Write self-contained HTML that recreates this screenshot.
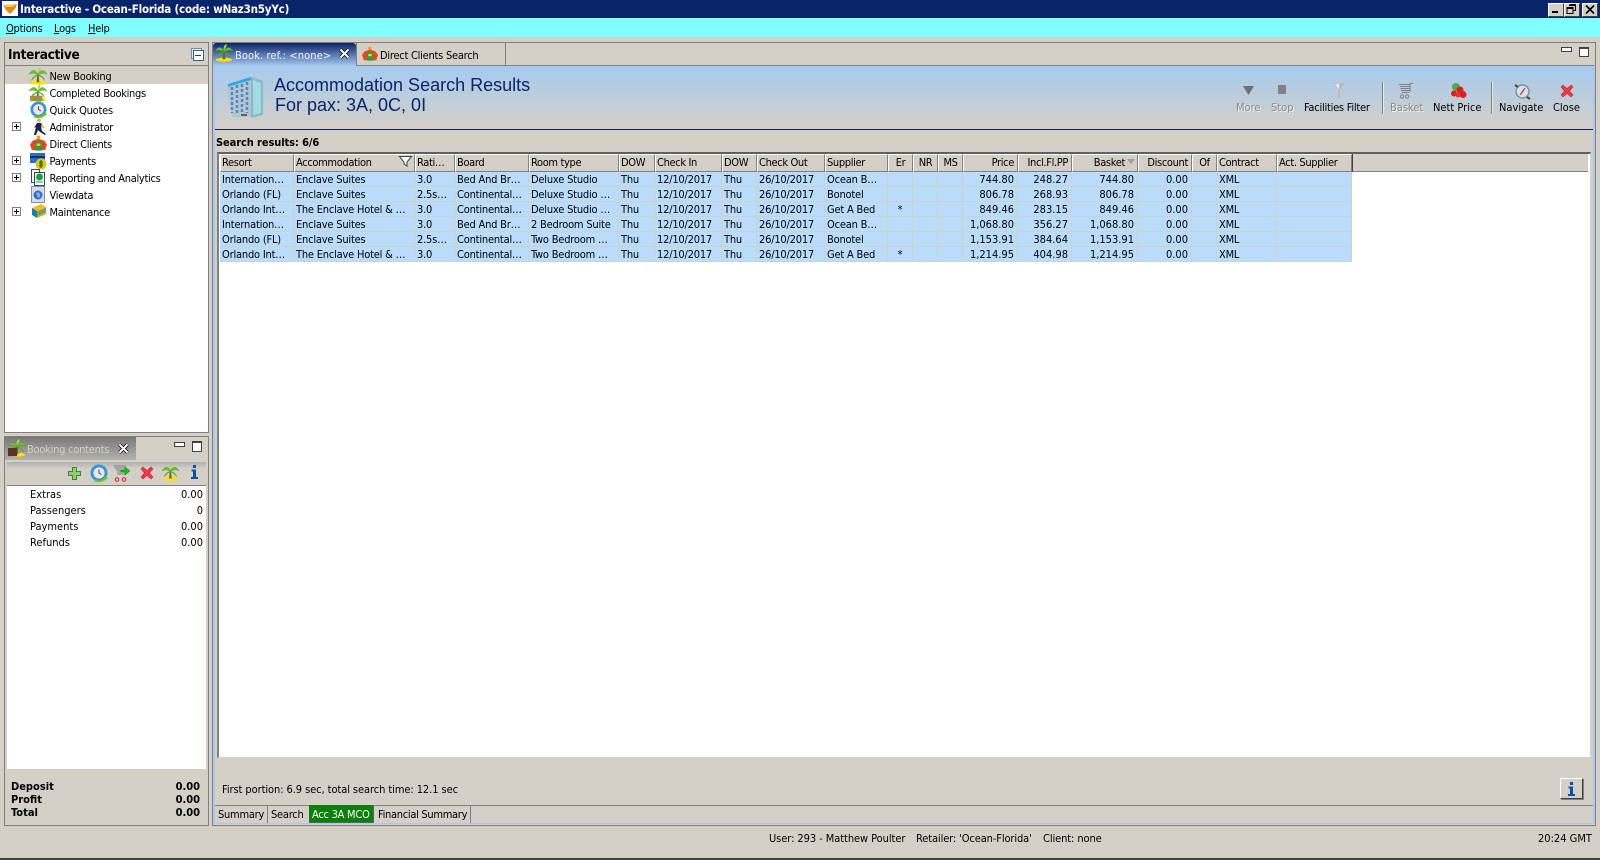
<!DOCTYPE html>
<html><head><meta charset="utf-8"><title>Interactive</title>
<style>
html,body{margin:0;padding:0;width:1600px;height:860px;overflow:hidden;background:#d4d0c8}
body{position:relative;font:11px/14px "DejaVu Sans Condensed","Liberation Sans",sans-serif;color:#000}
.a{position:absolute}
.t{position:absolute;white-space:nowrap}
.s{letter-spacing:-.25px}
.r{text-align:right}
.b{font-weight:bold}
svg{position:absolute;overflow:visible}
table{position:absolute;left:220px;top:154px;width:1132px;border-collapse:separate;border-spacing:0;table-layout:fixed}
th{font-weight:normal;text-align:left;height:16px;padding:0 0 0 1px;background:#d4d0c8;border-top:1px solid #fff;border-left:1px solid #fff;border-right:1px solid #808080;border-bottom:1px solid #808080;box-shadow:1px 0 0 #404040;white-space:nowrap;overflow:hidden;line-height:16px;letter-spacing:-.35px}
td{height:13px;padding:1px 0 0 2px;background:#b9dcff;border-right:1px solid #d4d0c8;border-bottom:1px solid #d4d0c8;white-space:nowrap;overflow:hidden;line-height:13px;letter-spacing:-.2px}
th.n,td.n{text-align:right;padding-right:3px;padding-left:0}
td.n{letter-spacing:0}
th.c,td.c{text-align:center;padding-left:0;padding-right:0}
u{text-decoration:underline}
</style></head>
<body>
<svg width="0" height="0" style="position:absolute"><defs>
<g id="palm"><ellipse cx="10" cy="17.500" rx="9" ry="2.200" fill="#ffe000"/><path d="M9 8.500 L10.500 8.500 L11.500 17 L8.500 17Z" fill="#8a5a18"/><path d="M10 8C7 2 3 3 0 8 4 6 7 7 10 9 7 9 3 11 3 15 6 11 8 10 10 9.500 12 10 15 11 17 15 17 11 13 9 10 9 13 7 16 6 20 8 17 3 13 2 10 8Z" fill="#6cc028" stroke="#38901c" stroke-width=".4"/><path d="M10 7C9 4 10 1 13 0 13 3 11 5 10 7Z" fill="#a8e040"/></g>
<g id="xred"><path d="M2 4 4 2 8 5.500 12 2 14 4 10.500 8 14 12 12 14 8 10.500 4 14 2 12 5.500 8Z" fill="#ee3a46" stroke="#c03040" stroke-width=".6"/></g>
<g id="clock"><circle cx="9" cy="9" r="8.500" fill="#2a9be8"/><circle cx="9" cy="9" r="6" fill="#e4e8ee" stroke="#777" stroke-width=".7"/><path d="M9 5.500V9L11.500 10.500" fill="none" stroke="#444" stroke-width="1"/><path d="M5 15Q10 19 16 12L18 14Q12 20 4 17.500Z" fill="#6cc82c"/></g>
<g id="shirt"><circle cx="9" cy="2.500" r="2" fill="#f0a020"/><path d="M3 6 9 4 15 6 18 10 16 16H2L0 10Z" fill="#e8481c"/><path d="M5.500 7H12.500V16.500H5.500Z" fill="#2e9a50"/><path d="M7 9H11V11.500H7Z" fill="#f8d020"/></g>
<g id="info"><path d="M4 0h3v3h-3zM2.500 4.500h4.500v7.500h2v2H2v-2h2v-5.500h-1.500z" fill="#0a50a8"/></g>
</defs></svg>

<!-- title bar -->
<div class="a" style="left:0;top:0;width:1600px;height:18px;background:#0a246a"></div>
<div class="a" style="left:2px;top:1px;width:16px;height:15px;background:#fff"></div>
<svg style="left:3px;top:3px" width="15" height="12"><path d="M0 2 14 1 12 6 7 11 3 7Z" fill="#e08a18"/><path d="M0 2 14 1 9 4 3 4Z" fill="#f8c860"/></svg>
<div class="t b" style="left:20px;top:2px;color:#fff;font-size:11.500px;letter-spacing:-.2px">Interactive - Ocean-Florida (code: wNaz3n5yYc)</div>
<div class="a" style="left:1548px;top:3px;width:14px;height:12px;background:#d4d0c8;border:1px solid;border-color:#fff #404040 #404040 #fff"></div>
<div class="a" style="left:1552px;top:11px;width:6px;height:2px;background:#000"></div>
<div class="a" style="left:1564px;top:3px;width:14px;height:12px;background:#d4d0c8;border:1px solid;border-color:#fff #404040 #404040 #fff"></div>
<svg style="left:1566px;top:4px" width="11" height="11"><path d="M3.500 .5H9.500V6.500H7M1 3.500H7V9.500H1Z M3 1.500H9.500M1 4.500H7" fill="none" stroke="#000"/></svg>
<div class="a" style="left:1582px;top:3px;width:14px;height:12px;background:#d4d0c8;border:1px solid;border-color:#fff #404040 #404040 #fff"></div>
<svg style="left:1585px;top:5px" width="10" height="9"><path d="M1 .5 9 8.500M9 .5 1 8.500" stroke="#000" stroke-width="1.700"/></svg>

<!-- menu -->
<div class="a" style="left:0;top:18px;width:1600px;height:19px;background:#80ffff"></div>
<div class="t s" style="left:6px;top:22px"><u>O</u>ptions</div>
<div class="t s" style="left:54px;top:22px"><u>L</u>ogs</div>
<div class="t s" style="left:88px;top:22px"><u>H</u>elp</div>

<!-- left top panel -->
<div class="a" style="left:4px;top:42px;width:203px;height:389px;border:1px solid #808080;background:#fff"></div>
<div class="a" style="left:5px;top:43px;width:203px;height:22px;background:#d4d0c8;border-bottom:1px solid #808080"></div>
<div class="t b" style="left:8px;top:48px;font-size:13.500px;letter-spacing:-.3px">Interactive</div>
<div class="a" style="left:191px;top:48px;width:9px;height:9px;border:1px solid #7090b0;background:#e0e8f0"></div>
<div class="a" style="left:193px;top:50px;width:9px;height:9px;border:1px solid #406080;background:#fff"></div>
<div class="a" style="left:195px;top:55px;width:6px;height:1px;background:#204060"></div>
<div class="a" style="left:5px;top:66px;width:203px;height:18px;background:#d4d0c8"></div>

<svg style="left:29px;top:67px" width="18" height="18" viewBox="0 0 20 20"><use href="#palm"/></svg>
<svg style="left:29px;top:84px" width="18" height="18" viewBox="0 0 20 20"><use href="#palm"/><rect x="1" y="13" width="14" height="6" fill="#a09048"/></svg>
<svg style="left:30px;top:101px" width="17" height="17" viewBox="0 0 18 18"><use href="#clock"/></svg>
<svg style="left:32px;top:118px" width="15" height="18"><circle cx="7" cy="2.500" r="2" fill="#e8b080"/><path d="M5 5h4l3 5-3-1 1 4 4 3-1 1-5-3-2-2-2 5H2l2-8-2 1z" fill="#1a2050"/><path d="M9 7l4 2-1 1-3-1z" fill="#e8c020"/></svg>
<svg style="left:30px;top:135px" width="17" height="17" viewBox="0 0 18 18"><use href="#shirt"/></svg>
<svg style="left:30px;top:153px" width="16" height="17"><rect x="0" y="0" width="15" height="10" fill="#2a70c8"/><rect x="0" y="3" width="15" height="2" fill="#183060"/><circle cx="11" cy="11" r="5.500" fill="#e8c020"/><path d="M11 7v8M13 9h-3v2h2v2h-3" fill="none" stroke="#188018" stroke-width="1.300"/></svg>
<svg style="left:31px;top:169px" width="15" height="17"><rect x=".5" y=".5" width="8" height="13" fill="#fff" stroke="#304860"/><rect x="3.500" y="3.500" width="10" height="13" fill="#fff" stroke="#304860"/><circle cx="8.500" cy="8" r="3.500" fill="#18a040"/><path d="M5 13h7" stroke="#18a040"/></svg>
<svg style="left:31px;top:186px" width="15" height="18"><rect x=".5" y=".5" width="13" height="16" fill="#d8dce8" stroke="#8090a8"/><circle cx="7" cy="9" r="4.500" fill="#3070c0"/><path d="M5 7q3-2 4 1t-2 4z" fill="#80b0e8"/></svg>
<svg style="left:31px;top:203px" width="16" height="16"><path d="M1 5 10 1 15 4 6 8Z" fill="#f0c020"/><path d="M1 5 6 8V15L1 12Z" fill="#1880a8"/><path d="M6 8 15 4V11L6 15Z" fill="#e8a010"/><path d="M6 10 15 6M6 12 15 8" stroke="#18a0c0"/></svg>

<div class="t s" style="left:49.500px;top:70px">New Booking</div>
<div class="t" style="left:49.500px;top:87px;letter-spacing:-.33px">Completed Bookings</div>
<div class="t s" style="left:49.500px;top:104px">Quick Quotes</div>
<div class="t" style="left:49.500px;top:121px;letter-spacing:-.3px">Administrator</div>
<div class="t" style="left:49.500px;top:138px;letter-spacing:-.3px">Direct Clients</div>
<div class="t s" style="left:49.500px;top:155px">Payments</div>
<div class="t" style="left:49.500px;top:172px;letter-spacing:-.3px">Reporting and Analytics</div>
<div class="t s" style="left:49.500px;top:189px">Viewdata</div>
<div class="t" style="left:49.500px;top:206px;letter-spacing:-.3px">Maintenance</div>

<svg style="left:12px;top:122px" width="9" height="9"><path d="M.5 .5h8v8h-8z" fill="#fff" stroke="#808080"/><path d="M2 4.500h5M4.500 2v5" stroke="#000"/></svg>
<svg style="left:12px;top:156px" width="9" height="9"><path d="M.5 .5h8v8h-8z" fill="#fff" stroke="#808080"/><path d="M2 4.500h5M4.500 2v5" stroke="#000"/></svg>
<svg style="left:12px;top:173px" width="9" height="9"><path d="M.5 .5h8v8h-8z" fill="#fff" stroke="#808080"/><path d="M2 4.500h5M4.500 2v5" stroke="#000"/></svg>
<svg style="left:12px;top:207px" width="9" height="9"><path d="M.5 .5h8v8h-8z" fill="#fff" stroke="#808080"/><path d="M2 4.500h5M4.500 2v5" stroke="#000"/></svg>

<!-- left bottom panel -->
<div class="a" style="left:4px;top:436px;width:203px;height:388px;border:1px solid #808080;background:#d4d0c8"></div>
<div class="a" style="left:5px;top:437px;width:131px;height:23px;background:linear-gradient(#787878,#b4b2ae)"></div>
<svg style="left:8px;top:439px" width="18" height="18" viewBox="0 0 20 20"><use href="#palm"/><rect x="0" y="10" width="10" height="9" fill="#5a3420"/></svg>
<div class="t s" style="left:27px;top:443px;color:#d4d0c8">Booking contents</div>
<svg style="left:118px;top:443px" width="11" height="11"><path d="M1.500 1.500 9.500 9.500M9.500 1.500 1.500 9.500" stroke="#000" stroke-width="3.500"/><path d="M1.500 1.500 9.500 9.500M9.500 1.500 1.500 9.500" stroke="#fff" stroke-width="2"/></svg>
<div class="a" style="left:174px;top:442px;width:9px;height:3px;border:1px solid #404040;background:#fff"></div>
<div class="a" style="left:192px;top:441px;width:8px;height:8px;border:1px solid #404040;border-top-width:2px;background:#fff"></div>
<div class="a" style="left:7px;top:462px;width:199px;height:23px;background:linear-gradient(#b0b0b0,#d4d0c8 30%);border-bottom:1px solid #808080"></div>
<svg style="left:68px;top:467px" width="13" height="13"><path d="M4.500 .5h4v4h4v4h-4v4h-4v-4h-4v-4h4z" fill="#9ccc60" stroke="#2f8a50"/></svg>
<svg style="left:90px;top:464px" width="18" height="18" viewBox="0 0 18 18"><use href="#clock"/></svg>
<svg style="left:114px;top:465px" width="17" height="17"><path d="M0 1h12M1 3h10M2 5h9M3 7h8M3 9h8" stroke="#808080"/><path d="M7 5h4V2l5 4-5 4V7H7z" fill="#18c018" stroke="#0a700a" stroke-width=".5"/><circle cx="3" cy="14.500" r="1.800" fill="none" stroke="#d02020"/><circle cx="10" cy="14.500" r="1.800" fill="none" stroke="#d02020"/></svg>
<svg style="left:139px;top:465px" width="16" height="16"><use href="#xred"/></svg>
<svg style="left:162px;top:464px" width="17" height="17" viewBox="0 0 20 20"><use href="#palm"/></svg>
<svg style="left:189px;top:465px" width="11" height="15"><use href="#info"/></svg>
<div class="a" style="left:7px;top:486px;width:199px;height:283px;background:#fff"></div>
<div class="t" style="left:30px;top:488px">Extras</div><div class="t r" style="right:1397px;top:488px">0.00</div>
<div class="t" style="left:30px;top:504px">Passengers</div><div class="t r" style="right:1397px;top:504px">0</div>
<div class="t" style="left:30px;top:520px">Payments</div><div class="t r" style="right:1397px;top:520px">0.00</div>
<div class="t" style="left:30px;top:536px">Refunds</div><div class="t r" style="right:1397px;top:536px">0.00</div>
<div class="t b" style="left:11px;top:780px;line-height:13px">Deposit<br>Profit<br>Total</div>
<div class="t b r" style="right:1400px;top:780px;line-height:13px">0.00<br>0.00<br>0.00</div>

<!-- main panel -->
<div class="a" style="left:212px;top:42px;width:1382px;height:782px;border:1px solid #808080;background:#d4d0c8"></div>
<div class="a" style="left:213px;top:66px;width:2px;height:757px;background:#a6caf0"></div>
<div class="a" style="left:1593px;top:66px;width:2px;height:757px;background:#a6caf0"></div>
<div class="a" style="left:213px;top:823px;width:1382px;height:1px;background:#a6caf0"></div>
<div class="a" style="left:213px;top:65px;width:1381px;height:1px;background:#808080"></div>

<!-- tabs -->
<div class="a" style="left:213px;top:43px;width:143px;height:23px;background:linear-gradient(#0a246a,#a6caf0);border-radius:3px 3px 0 0"></div>
<svg style="left:215px;top:44px" width="18" height="18" viewBox="0 0 20 20"><use href="#palm"/></svg>
<div class="t" style="left:235px;top:49px;color:#eef2f8;letter-spacing:.1px">Book. ref.: &lt;none&gt;</div>
<svg style="left:339px;top:48px" width="11" height="11"><path d="M1.500 1.500 9.500 9.500M9.500 1.500 1.500 9.500" stroke="#000" stroke-width="3.500"/><path d="M1.500 1.500 9.500 9.500M9.500 1.500 1.500 9.500" stroke="#fff" stroke-width="2"/></svg>
<div class="a" style="left:356px;top:43px;width:148px;height:22px;border-right:1px solid #808080;border-left:1px solid #808080"></div>
<svg style="left:362px;top:46px" width="16" height="16" viewBox="0 0 18 18"><use href="#shirt"/></svg>
<div class="t s" style="left:380px;top:49px">Direct Clients Search</div>
<div class="a" style="left:1561px;top:47px;width:9px;height:3px;border:1px solid #404040;background:#fff"></div>
<div class="a" style="left:1579px;top:47px;width:8px;height:7px;border:1px solid #404040;border-top-width:2px;background:#fff"></div>

<!-- blue header -->
<div class="a" style="left:215px;top:66px;width:1378px;height:63px;background:linear-gradient(#a6caf0,#d4d0c8)"></div>
<div class="a" style="left:215px;top:129px;width:1378px;height:1px;background:#0a246a"></div>
<svg style="left:227px;top:73px" width="37" height="47"><path d="M0 11 24 4V44L5 44Z" fill="#b8c4d0"/><path d="M24 4 36 8V42L24 45Z" fill="#8cb8c4"/><path d="M26 7 34 10V40L26 42Z" fill="#a0dce4"/><path d="M1 11 24 4V7L1 14Z" fill="#30a8e0"/><g stroke="#4a8cc8" stroke-width="2.500" stroke-dasharray="3 2"><path d="M5 14V40M10 12V40M15 11V40M20 9V40"/></g><path d="M14 42h6" stroke="#606060" stroke-width="2"/></svg>
<div class="t" style="left:274px;top:75px;font:18px/20px 'Liberation Sans',sans-serif;color:#0a246a">Accommodation Search Results</div>
<div class="t" style="left:275px;top:95px;font:18px/20px 'Liberation Sans',sans-serif;color:#0a246a">For pax: 3A, 0C, 0I</div>

<!-- toolbar -->
<svg style="left:1243px;top:85px" width="12" height="12"><path d="M0 1H11L5.500 10Z" fill="#707070"/></svg>
<div class="a" style="left:1278px;top:85px;width:8px;height:9px;background:#808080"></div>
<svg style="left:1333px;top:83px" width="12" height="16"><path d="M0 0H12L7 7V15H5V7Z" fill="#b8bcc4"/><path d="M2 1H6V7Z" fill="#eee"/></svg>
<div class="a" style="left:1382px;top:82px;width:1px;height:32px;background:#808080;box-shadow:1px 0 0 #e8e8e8"></div>
<svg style="left:1399px;top:83px" width="16" height="16"><path d="M0 1.500H11M1 3.500H11M1.500 5.500H11M2 7.500H11M3 9.500H10M11 9V1L14 0" fill="none" stroke="#808080"/><circle cx="3" cy="13.500" r="1.700" fill="none" stroke="#808080"/><circle cx="8" cy="13.500" r="1.700" fill="none" stroke="#808080"/></svg>
<svg style="left:1450px;top:83px" width="17" height="16"><circle cx="6" cy="4" r="4" fill="#58a848"/><circle cx="10" cy="7" r="3.500" fill="#d82020"/><circle cx="4" cy="10.500" r="3" fill="#d82020"/><circle cx="13" cy="11.500" r="3.500" fill="#d82020"/><circle cx="8" cy="12" r="2.500" fill="#e83030"/></svg>
<div class="a" style="left:1491px;top:82px;width:1px;height:32px;background:#808080;box-shadow:1px 0 0 #e8e8e8"></div>
<svg style="left:1514px;top:83px" width="17" height="17"><circle cx="8.500" cy="8.500" r="6.500" fill="#cfe4f4" stroke="#8090a0" stroke-width="1.500"/><path d="M11 5 8 9 6 12 9 8.500Z" fill="#e03020" stroke="#e03020"/><path d="M1 2 4 4M13 14 16 16" stroke="#604020" stroke-width="2"/></svg>
<svg style="left:1559px;top:83px" width="16" height="16"><use href="#xred"/></svg>

<div class="t" style="left:1236px;top:101px;color:#8a8a8a;text-shadow:1px 1px 0 #f0f0f0">More</div>
<div class="t" style="left:1271px;top:101px;color:#8a8a8a;text-shadow:1px 1px 0 #f0f0f0">Stop</div>
<div class="t s" style="left:1304px;top:101px">Facilities Filter</div>
<div class="t" style="left:1390px;top:101px;color:#8a8a8a;text-shadow:1px 1px 0 #f0f0f0">Basket</div>
<div class="t" style="left:1433px;top:101px">Nett Price</div>
<div class="t" style="left:1499px;top:101px">Navigate</div>
<div class="t" style="left:1553px;top:101px">Close</div>

<div class="t b" style="left:216px;top:136px;letter-spacing:-.1px">Search results: 6/6</div>

<!-- grid -->
<div class="a" style="left:217px;top:152px;background:#fff;border-top:2px solid #606060;border-left:2px solid #808080;border-right:1px solid #d4d0c8;border-bottom:1px solid #d4d0c8;box-sizing:border-box;width:1374px;height:606px"></div>
<div class="a" style="left:220px;top:154px;width:1368px;height:18px;background:#d4d0c8;border-bottom:1px solid #808080;box-sizing:border-box"></div>
<table>
<colgroup><col style="width:74px"><col style="width:121px"><col style="width:40px"><col style="width:74px"><col style="width:90px"><col style="width:36px"><col style="width:67px"><col style="width:35px"><col style="width:68px"><col style="width:63px"><col style="width:25px"><col style="width:25px"><col style="width:25px"><col style="width:55px"><col style="width:54px"><col style="width:66px"><col style="width:54px"><col style="width:25px"><col style="width:60px"><col style="width:75px"></colgroup>
<tr><th>Resort</th><th>Accommodation</th><th>Rati…</th><th>Board</th><th>Room type</th><th>DOW</th><th>Check In</th><th>DOW</th><th>Check Out</th><th>Supplier</th><th class="c">Er</th><th class="c">NR</th><th class="c">MS</th><th class="n">Price</th><th class="n">Incl.Fl.PP</th><th class="n" style="padding-right:12px">Basket</th><th class="n">Discount</th><th class="c">Of</th><th>Contract</th><th>Act. Supplier</th></tr>
<tr><td>Internation…</td><td>Enclave Suites</td><td>3.0</td><td>Bed And Br…</td><td>Deluxe Studio</td><td>Thu</td><td>12/10/2017</td><td>Thu</td><td>26/10/2017</td><td>Ocean B…</td><td class="c"></td><td></td><td></td><td class="n">744.80</td><td class="n">248.27</td><td class="n">744.80</td><td class="n">0.00</td><td></td><td>XML</td><td></td></tr>
<tr><td>Orlando (FL)</td><td>Enclave Suites</td><td>2.5s…</td><td>Continental…</td><td>Deluxe Studio …</td><td>Thu</td><td>12/10/2017</td><td>Thu</td><td>26/10/2017</td><td>Bonotel</td><td class="c"></td><td></td><td></td><td class="n">806.78</td><td class="n">268.93</td><td class="n">806.78</td><td class="n">0.00</td><td></td><td>XML</td><td></td></tr>
<tr><td>Orlando Int…</td><td>The Enclave Hotel &amp; …</td><td>3.0</td><td>Continental…</td><td>Deluxe Studio …</td><td>Thu</td><td>12/10/2017</td><td>Thu</td><td>26/10/2017</td><td>Get A Bed</td><td class="c">*</td><td></td><td></td><td class="n">849.46</td><td class="n">283.15</td><td class="n">849.46</td><td class="n">0.00</td><td></td><td>XML</td><td></td></tr>
<tr><td>Internation…</td><td>Enclave Suites</td><td>3.0</td><td>Bed And Br…</td><td>2 Bedroom Suite</td><td>Thu</td><td>12/10/2017</td><td>Thu</td><td>26/10/2017</td><td>Ocean B…</td><td class="c"></td><td></td><td></td><td class="n">1,068.80</td><td class="n">356.27</td><td class="n">1,068.80</td><td class="n">0.00</td><td></td><td>XML</td><td></td></tr>
<tr><td>Orlando (FL)</td><td>Enclave Suites</td><td>2.5s…</td><td>Continental…</td><td>Two Bedroom …</td><td>Thu</td><td>12/10/2017</td><td>Thu</td><td>26/10/2017</td><td>Bonotel</td><td class="c"></td><td></td><td></td><td class="n">1,153.91</td><td class="n">384.64</td><td class="n">1,153.91</td><td class="n">0.00</td><td></td><td>XML</td><td></td></tr>
<tr><td>Orlando Int…</td><td>The Enclave Hotel &amp; …</td><td>3.0</td><td>Continental…</td><td>Two Bedroom …</td><td>Thu</td><td>12/10/2017</td><td>Thu</td><td>26/10/2017</td><td>Get A Bed</td><td class="c">*</td><td></td><td></td><td class="n">1,214.95</td><td class="n">404.98</td><td class="n">1,214.95</td><td class="n">0.00</td><td></td><td>XML</td><td></td></tr>
</table>
<svg style="left:399px;top:156px" width="13" height="11"><path d="M.5 .5H12.500L8 6V10L5 8V6Z" fill="#fff" stroke="#404040"/></svg>
<svg style="left:1127px;top:159px" width="9" height="6"><path d="M0 0H8L4 5Z" fill="#a0a0a0"/></svg>

<!-- bottom -->
<div class="t" style="left:222px;top:783px;letter-spacing:-.08px">First portion: 6.9 sec, total search time: 12.1 sec</div>
<div class="a" style="left:1560px;top:778px;width:21px;height:19px;background:#d4d0c8;border:1px solid;border-color:#fff #404040 #404040 #fff;box-shadow:1px 1px 0 #808080"></div>
<svg style="left:1566px;top:782px" width="11" height="15"><use href="#info"/></svg>
<div class="a" style="left:215px;top:805px;width:1378px;height:1px;background:#808080"></div>
<div class="a" style="left:267px;top:806px;width:1px;height:17px;background:#808080"></div>
<div class="a" style="left:470px;top:806px;width:1px;height:17px;background:#808080"></div>
<div class="t s" style="left:218px;top:808px">Summary</div>
<div class="t s" style="left:271px;top:808px">Search</div>
<div class="a" style="left:309px;top:805px;width:64px;height:17px;background:#0a800a;border-right:1px solid #606060;border-bottom:1px solid #606060"></div>
<div class="t s" style="left:312px;top:808px;color:#fff">Acc 3A MCO</div>
<div class="t" style="left:378px;top:808px;letter-spacing:-.3px">Financial Summary</div>

<!-- status -->
<div class="t" style="left:769px;top:832px;letter-spacing:-.07px">User: 293 - Matthew Poulter</div>
<div class="t" style="left:916px;top:832px;letter-spacing:-.12px">Retailer: 'Ocean-Florida'</div>
<div class="t" style="left:1043px;top:832px;letter-spacing:-.1px">Client: none</div>
<div class="t" style="left:1538px;top:832px">20:24 GMT</div>
<div class="a" style="left:0;top:858px;width:1600px;height:2px;background:#404040"></div>
</body></html>
